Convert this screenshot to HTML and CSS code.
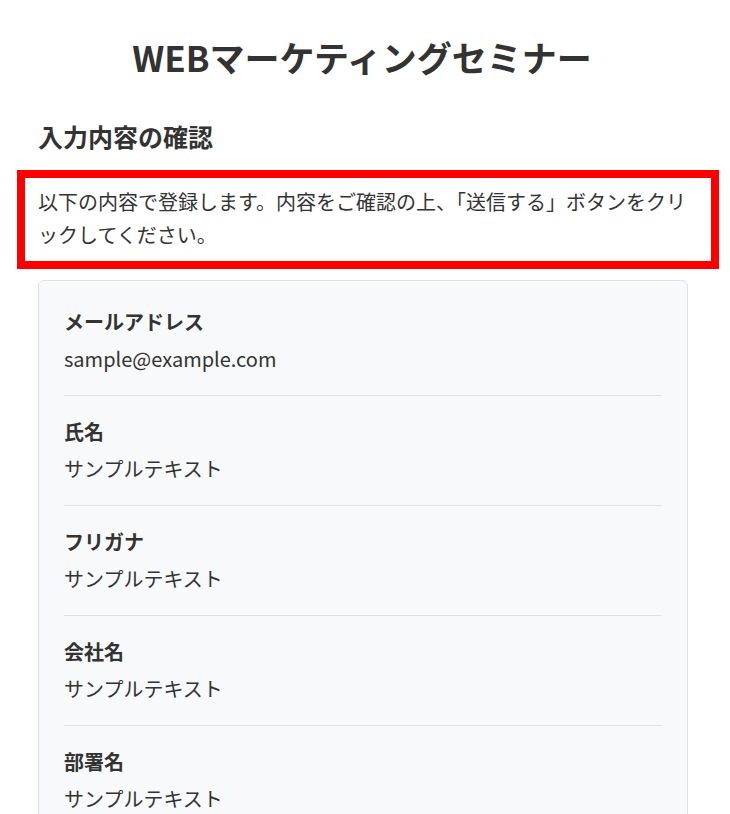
FILE: index.html
```html
<!DOCTYPE html>
<html lang="ja">
<head>
<meta charset="utf-8">
<title>WEBマーケティングセミナー 入力内容の確認</title>
<link rel="stylesheet" href="styles.css">
</head>
<body>
<main class="page">
  <h1 class="title">WEBマーケティングセミナー</h1>
  <h2 class="subtitle">入力内容の確認</h2>
  <div class="notice">
    <p class="notice-text">以下の内容で登録します。内容をご確認の上、「送信する」ボタンをクリックしてください。</p>
  </div>
  <dl class="card">
    <div class="item">
      <dt class="label">メールアドレス</dt>
      <dd class="value">sample@example.com</dd>
    </div>
    <div class="item">
      <dt class="label">氏名</dt>
      <dd class="value">サンプルテキスト</dd>
    </div>
    <div class="item">
      <dt class="label">フリガナ</dt>
      <dd class="value">サンプルテキスト</dd>
    </div>
    <div class="item">
      <dt class="label">会社名</dt>
      <dd class="value">サンプルテキスト</dd>
    </div>
    <div class="item">
      <dt class="label">部署名</dt>
      <dd class="value">サンプルテキスト</dd>
    </div>
    <div class="item">
      <dt class="label">電話番号</dt>
      <dd class="value">000-0000-0000</dd>
    </div>
  </dl>
</main>
</body>
</html>
```

FILE: styles.css
```css
html, body {
  margin: 0;
  padding: 0;
  background: #ffffff;
}

body {
  font-family: "Noto Sans CJK JP", "Noto Sans", sans-serif;
  color: #333333;
  font-size: 20px;
}

.page {
  width: 724px;
  padding: 30px 0 40px;
  box-sizing: border-box;
}

.title {
  margin: 0;
  font-size: 35px;
  line-height: 54px;
  font-weight: 700;
  text-align: center;
}

.subtitle {
  margin: 34px 0 0 38px;
  font-size: 25px;
  line-height: 36px;
  font-weight: 700;
}

.notice {
  margin: 16px 0 0 17px;
  width: 702px;
  box-sizing: border-box;
  border: 8px solid #ff0000;
  padding: 8px 8px 10px 13px;
}

.notice-text {
  margin: 0;
  font-size: 20px;
  line-height: 32.6px;
}

.card {
  margin: 11px 0 0 38px;
  width: 650px;
  box-sizing: border-box;
  background: #f8f9fa;
  border: 1px solid #dee2e6;
  border-radius: 6px;
  padding: 5px 25px 0;
}

.item {
  padding: 19px 0 20px;
  border-bottom: 1px solid #dee2e6;
}

.item:last-child {
  border-bottom: none;
}

.label {
  margin: 0;
  font-weight: 700;
  line-height: 33px;
}

.value {
  margin: 4px 0 0;
  line-height: 33px;
}
```
